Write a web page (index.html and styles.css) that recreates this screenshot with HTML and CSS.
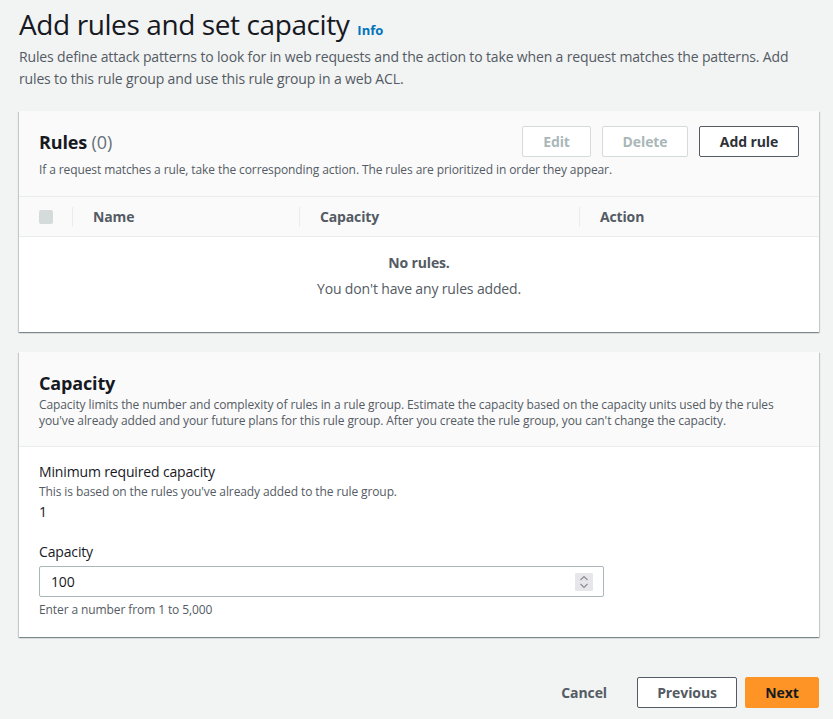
FILE: index.html
```html
<!DOCTYPE html>
<html>
<head>
<meta charset="utf-8">
<link rel="stylesheet" href="styles.css">
</head>
<body>
<div class="page">
  <div class="page-head">
    <h1 class="title">Add rules and set capacity <a class="info">Info</a></h1>
    <p class="lead">Rules define attack patterns to look for in web requests and the action to take when a request matches the patterns. Add rules to this rule group and use this rule group in a web ACL.</p>
  </div>

  <section class="panel">
    <div class="panel-head rules-head">
      <div class="head-row">
        <h2 class="panel-title">Rules <span class="count">(0)</span></h2>
        <div class="actions">
          <button class="btn disabled">Edit</button>
          <button class="btn disabled">Delete</button>
          <button class="btn strong">Add rule</button>
        </div>
      </div>
      <p class="panel-desc">If a request matches a rule, take the corresponding action. The rules are prioritized in order they appear.</p>
    </div>
    <div class="table-head">
      <div class="th th-check"><span class="checkbox"></span></div>
      <div class="th th-name">Name</div>
      <div class="th th-cap">Capacity</div>
      <div class="th th-action">Action</div>
    </div>
    <div class="empty">
      <div class="empty-title">No rules.</div>
      <div class="empty-text">You don't have any rules added.</div>
    </div>
  </section>

  <section class="panel">
    <div class="panel-head cap-head">
      <h2 class="panel-title">Capacity</h2>
      <p class="panel-desc">Capacity limits the number and complexity of rules in a rule group. Estimate the capacity based on the capacity units used by the rules you've already added and your future plans for this rule group. After you create the rule group, you can't change the capacity.</p>
    </div>
    <div class="panel-body">
      <div class="field">
        <div class="label">Minimum required capacity</div>
        <div class="desc">This is based on the rules you've already added to the rule group.</div>
        <div class="value">1</div>
      </div>
      <div class="field field-input">
        <div class="label">Capacity</div>
        <div class="input">
          <span class="input-value">100</span>
          <span class="spinner">
            <svg width="12" height="16" viewBox="0 0 12 16"><path d="M2.5 6 L6 2.5 L9.5 6" fill="none" stroke="#8d8d92" stroke-width="1.2"/><path d="M2.5 10 L6 13.5 L9.5 10" fill="none" stroke="#8d8d92" stroke-width="1.2"/></svg>
          </span>
        </div>
        <div class="hint">Enter a number from 1 to 5,000</div>
      </div>
    </div>
  </section>

  <div class="footer">
    <button class="link-btn">Cancel</button>
    <button class="btn">Previous</button>
    <button class="btn primary">Next</button>
  </div>
</div>
</body>
</html>
```

FILE: styles.css
```css
* { box-sizing: border-box; }
html, body { margin: 0; padding: 0; }
body {
  background: #f2f3f3;
  font-family: "Open Sans", "Noto Sans", sans-serif;
  color: #16191f;
  width: 833px;
  height: 719px;
  overflow: hidden;
  letter-spacing: -0.15px;
}
.page {
  padding: 7px 14px 0 19px;
  display: flex;
  flex-direction: column;
}
.title {
  margin: 0;
  font-size: 28px;
  font-weight: 400;
  line-height: 34px;
  height: 34px;
  color: #16191f;
  letter-spacing: -0.4px;
}
.info {
  font-size: 13px;
  font-weight: 700;
  line-height: 1;
  color: #0073bb;
  margin-left: 1px;
  letter-spacing: 0;
}
.lead {
  margin: 5px 0 0;
  font-size: 14px;
  line-height: 22px;
  color: #545b64;
}
.panel {
  background: #fff;
  margin-top: 21px;
  box-shadow: 0 1px 1px 0 rgba(0,28,36,.3), 1px 1px 1px 0 rgba(0,28,36,.15), -1px 1px 1px 0 rgba(0,28,36,.15);
}
.panel + .panel { margin-top: 20px; }
.panel-head {
  background: #fafafa;
  border-bottom: 1px solid #eaeded;
  padding: 15px 20px 18px;
}
.head-row {
  display: flex;
  justify-content: space-between;
  align-items: center;
}
.panel-title {
  margin: 0;
  font-size: 18px;
  font-weight: 700;
  line-height: 30px;
}
.count { font-weight: 400; color: #687078; }
.actions { display: flex; gap: 11px; }
.btn {
  font-family: inherit;
  font-size: 14px;
  font-weight: 700;
  letter-spacing: -0.1px;
  height: 31px;
  padding: 0;
  background: #fff;
  border: 1px solid #545b64;
  border-radius: 2px;
  color: #545b64;
  cursor: pointer;
  white-space: nowrap;
}
.btn.disabled {
  border-color: #d5dbdb;
  color: #aab7b8;
}
.btn.strong { color: #2e3238; }
.actions .btn:nth-child(1) { width: 69px; }
.actions .btn:nth-child(2) { width: 86px; }
.actions .btn:nth-child(3) { width: 100px; }
.panel-desc {
  margin: 5px 0 0;
  font-size: 12px;
  line-height: 16px;
  color: #545b64;
  letter-spacing: -0.1px;
}
.table-head {
  display: grid;
  grid-template-columns: 53px 227px 280px 1fr;
  height: 40px;
  align-items: center;
  background: #fafafa;
  border-bottom: 1px solid #eaeded;
  font-size: 14px;
  font-weight: 700;
  color: #545b64;
}
.th {
  padding-left: 20px;
  border-left: 1px solid #eaeded;
  height: 20px;
  line-height: 20px;
}
.th-check { border-left: none; display: flex; align-items: center; }
.checkbox {
  width: 14px; height: 14px;
  background: #d5dbdb;
  border-radius: 2px;
}
.empty {
  text-align: center;
  padding: 15px 0 0;
  font-size: 14px;
  color: #545b64;
  line-height: 22px;
  height: 95px;
}
.empty-title { font-weight: 700; }
.empty-text { margin-top: 4px; }
.cap-head { padding: 18px 20px 17px; }
.cap-head .panel-title { line-height: 26px; }
.cap-head .panel-desc { margin-top: 1px; }
.panel-body {
  padding: 14px 20px 19px;
}
.label { font-size: 14px; line-height: 22px; }
.desc, .hint { font-size: 12px; line-height: 16px; color: #545b64; letter-spacing: -0.1px; }
.field .desc { margin-top: 1px; }
.value { font-size: 14px; line-height: 22px; margin-top: 1px; }
.field-input { margin-top: 18px; }
.input {
  margin-top: 3px;
  width: 565px;
  height: 31px;
  border: 1px solid #aab7b8;
  border-radius: 2px;
  display: flex;
  align-items: center;
  justify-content: space-between;
  padding: 0 10px 0 11px;
  font-size: 14px;
}
.spinner {
  width: 18px; height: 18px;
  background: #e7e6ea;
  display: flex; align-items: center; justify-content: center;
  border-radius: 1px;
}
.hint { margin-top: 5px; }
.footer {
  display: flex;
  justify-content: flex-end;
  align-items: center;
  margin-top: 40px;
}
.link-btn {
  font-family: inherit;
  font-size: 14px;
  font-weight: 700;
  letter-spacing: -0.1px;
  background: none;
  border: none;
  color: #545b64;
  padding: 0 20px;
  height: 31px;
  margin-right: 10px;
}
.footer .btn { height: 31px; }
.footer .btn:nth-child(2) { width: 100px; }
.btn.primary {
  margin-left: 8px;
  width: 74px;
  background: #ff9426;
  border-color: #ff9426;
  color: #16191f;
}
```
